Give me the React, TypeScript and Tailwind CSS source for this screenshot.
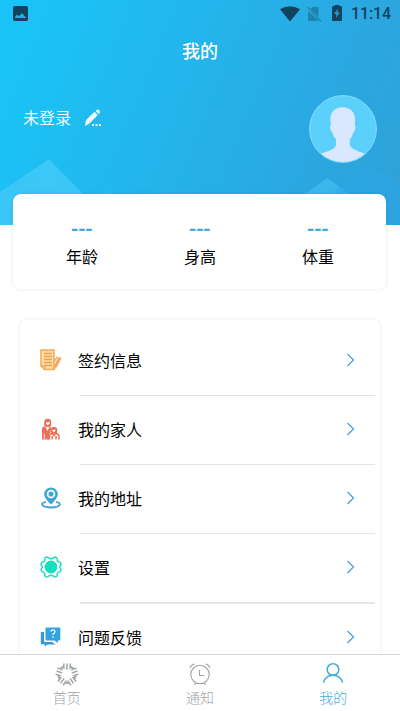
import { ReactNode } from "react";

interface MenuItem {
  label: string;
  icon: ReactNode;
  rowClass: string;
}

function StatusBar() {
  return (
    <div className="flex h-[27px] items-center justify-between pl-[13px] pr-[9px] text-[#10435c]">
      <svg width="15" height="15" viewBox="0 0 15 15">
        <rect width="15" height="15" rx="1.8" fill="currentColor" />
        <path d="M2 12V11L4.2 8.6 5.8 10.2 9 7l4 4.4v.6z" fill="#24acdb" />
      </svg>
      <div className="flex items-center">
        <svg width="20" height="16" viewBox="0 0 20 16">
          <path d="M0 3.3Q10-3 20 3.3L10 15.5z" fill="currentColor" />
        </svg>
        <svg className="ml-[6px]" width="16" height="16" viewBox="0 0 16 16">
          <path d="M6.500 1h6v14H2V6z" fill="#1f83ae" />
          <path d="M1 1.500l14 14" stroke="#2aaee3" strokeWidth="2.500" />
          <path d="M1.500 1l13.500 14.500" stroke="#2284b0" strokeWidth="1.200" />
        </svg>
        <svg className="mb-[2px] ml-[10px]" width="10" height="16" viewBox="0 0 10 16">
          <path d="M2.500 0h5v1.200H10V16H0V1.200h2.500z" fill="currentColor" />
          <path d="M6 3.500L2 9h2.500L4 13l4-5.500H5.500z" fill="#2a9bd0" />
        </svg>
        <span className="ml-[9px] font-[Roboto] text-[16px] font-medium leading-[26px] tracking-[-0.1px]">
          11:14
        </span>
      </div>
    </div>
  );
}

function Avatar() {
  return (
    <svg className="mt-[1px]" width="68" height="68" viewBox="0 0 68 68">
      <clipPath id="avatar">
        <circle cx="34" cy="34" r="33.200" />
      </clipPath>
      <circle cx="34" cy="34" r="33.400" fill="#5ad0fa" />
      <path
        clipPath="url(#avatar)"
        d="M33.500 12.300c8 0 12.600 5 12.600 12.500l-.3 5c1.200.5.8 6.500-1.300 7.200-.8 3.300-2 5.600-3.700 7.300v5.500c1 4.600 8 6.100 14.700 8.700L58 68H10l2.500-9.500c6.500-2.600 13.500-3.500 14.500-8.700v-5.500c-1.800-1.700-3-4-3.700-7.300-2.300-.7-2.800-6.600-1.500-7.200l-.5-5c0-7.500 4.200-12.500 12.200-12.500z"
        fill="#d9e7ff"
      />
      <circle cx="34" cy="34" r="33.400" fill="none" stroke="#87ddfb" />
    </svg>
  );
}

function ContractIcon() {
  return (
    <svg width="22" height="22" viewBox="0 0 22 22" fill="none">
      <path d="M1 1h13v19.500H4.500L1 17z" fill="#fbdcae" stroke="#f2aa52" strokeWidth="1.500" />
      <path d="M4 4.500h8M4 7.500h8M4 10.500h8M4 13.500h8M4 16.500h8" stroke="#f2a04a" strokeWidth="1.500" />
      <path d="M1 17h4v3.500" stroke="#f0a84f" />
      <path d="M21 9l-4.400 8.800-2.500 2.700.5-3.700 4-8.300z" fill="#f7a860" stroke="#f2a050" strokeWidth=".8" />
      <path d="M14 13l3.500-5.500" stroke="#f2a050" strokeWidth="1.200" />
    </svg>
  );
}

function FamilyIcon() {
  return (
    <svg width="22" height="22" viewBox="0 0 22 22" fill="none" stroke="#ec6f59">
      <path d="M4.200 7.500V4Q4.500.8 7.700.8T11.200 4v3.500L9.500 9H6z" fill="#ec6f59" stroke="none" />
      <path d="M6 4.500q2 .3 3.500-1V6L7.700 7.300 6 6z" fill="#fff" stroke="none" />
      <path d="M2 21.500V11q0-2.500 2.500-2.500h1l2 4.500 2-4.500 1.500 1-.5 4.500-1 2v5.500z" fill="#ec6f59" stroke="none" />
      <path d="M4.300 15.500v6" stroke="#fff" strokeWidth=".8" />
      <path d="M11 14.300c-1-4.500.8-5.300 3-5.300s4 .8 3 5.300l-1.500 1.500h-3z" fill="#ec6f59" stroke="none" />
      <path d="M12.300 12q2 0 3-.8v1.800l-1.300 1.200-1.500-1.200z" fill="#fff" stroke="none" />
      <path d="M9.500 21.500V17.500q.5-2 3-2l1.500 2 1.500-2q3 0 3.500 2.500v3.500M12.200 18v3.500M16 18v3.500" strokeWidth="1.500" />
    </svg>
  );
}

function AddressIcon() {
  return (
    <svg width="22" height="22" viewBox="0 0 22 22" fill="none" stroke="#3ca5d5">
      <path d="M6 14.800c-6.500 1.200-5 5.700 5 5.700s11.500-4.500 5-5.700" strokeWidth="1.800" />
      <path d="M11 17.500C6.500 13 4.200 10 4.200 7.200a6.800 6.800 0 0113.600 0c0 2.800-2.300 5.800-6.800 10.300z" fill="#3ca5d5" stroke="none" />
      <circle cx="11" cy="7" r="3.400" fill="#3ca5d5" stroke="#fff" strokeWidth="1.700" />
    </svg>
  );
}

function SettingsIcon() {
  return (
    <svg width="22" height="22" viewBox="0 0 22 22">
      <path
        d="M5.500 1.500Q8 .5 9 2.300q2 1 4 0Q14 .5 16.500 1.500q1.200 1 .7 2.800.8 1.700 3 2.200 1.500 2-.2 3.500-.5 1 0 2 1.700 1.500.2 3.500-2.200.5-3 2.200.5 1.800-.7 2.800-2.500 1-3.500-.8-2-1-4 0-1 1.800-3.500.8-1.200-1-.7-2.800-.8-1.700-3-2.200-1.500-2 .2-3.500.5-1 0-2Q.3 8.500 1.800 6.500q2.200-.5 3-2.200-.5-1.800.7-2.800z"
        fill="none"
        stroke="#2edcc0"
        strokeWidth="1.600"
        strokeLinejoin="round"
      />
      <circle cx="11" cy="11" r="6.400" fill="#16dfc0" />
    </svg>
  );
}

function FeedbackIcon() {
  return (
    <svg width="22" height="22" viewBox="0 0 22 22">
      <path d="M1.500 6H4v8.500q0 1.500 1.500 1.500H12l3.500 2.500H7.500L5 20.500l-.5-2.300h-3Q.8 18 .8 17V7q0-1 .7-1z" fill="#3699d2" />
      <path d="M6.500 1.500h12.800q1 0 1 1v11q0 1-1 1h-1.500v2.700L14.500 14.500h-8q-1 0-1-1v-11q0-1 1-1z" fill="#31a3e0" />
      <path d="M10.800 5.500Q11.200 3.800 13 3.800t2 1.800c0 1.600-2 1.500-2 3.300M13 10.300v1.500" fill="none" stroke="#fff" strokeWidth="1.300" />
    </svg>
  );
}

const petalAngles = [0, 72, 144, 216, 288];

function HomeIcon() {
  return (
    <svg width="24" height="24" viewBox="0 0 24 24" fill="none" stroke="#a3a8a8" strokeWidth="1.600">
      {petalAngles.map((angle) => (
        <path
          key={angle}
          d="M12 1.500v6M8.800 1.500v4.500l-2-1.500M15.200 1.500v4.500l2-1.500"
          transform={`rotate(${angle} 12 12.5)`}
        />
      ))}
    </svg>
  );
}

function NoticeIcon() {
  return (
    <svg width="24" height="24" viewBox="0 0 24 24" fill="none" stroke="#a3a8a8" strokeWidth="1.100">
      <circle cx="12" cy="12.500" r="9.200" />
      <path d="M11.500 8v5.500h4.800M7.500 20.800l-1 2.200M16.500 20.800l1 2.200M1.800 6Q3 2.700 6.300 2M22.200 6Q21 2.700 17.700 2" />
    </svg>
  );
}

function MineIcon() {
  return (
    <svg width="24" height="24" viewBox="0 0 24 24" fill="none" stroke="#3fadd9" strokeWidth="1.500">
      <circle cx="12" cy="7.500" r="5.800" />
      <path d="M2.500 20.500q2.200-7.200 9.500-7.200t9.500 7.200" />
    </svg>
  );
}

const stats = [
  { label: "年龄", value: "---" },
  { label: "身高", value: "---" },
  { label: "体重", value: "---" },
];

const menu: MenuItem[] = [
  { label: "签约信息", icon: <ContractIcon />, rowClass: "h-[69px] border-b" },
  { label: "我的家人", icon: <FamilyIcon />, rowClass: "h-[69px] border-b" },
  { label: "我的地址", icon: <AddressIcon />, rowClass: "h-[69px] border-b" },
  { label: "设置", icon: <SettingsIcon />, rowClass: "h-[70px] border-b-2" },
  { label: "问题反馈", icon: <FeedbackIcon />, rowClass: "h-[68px]" },
];

const tabs = [
  { label: "首页", icon: <HomeIcon />, color: "text-[#a0a5a5]" },
  { label: "通知", icon: <NoticeIcon />, color: "text-[#a0a5a5]" },
  { label: "我的", icon: <MineIcon />, color: "text-[#3fadd9]" },
];

function Header() {
  return (
    <header className="relative h-[225px] shrink-0 bg-[linear-gradient(112deg,#1ac4f8_5%,#23b5eb_44%,#2aa9e2_72%,#2fa0d8_100%)]">
      <svg className="absolute bottom-0 left-0" width="400" height="70" viewBox="0 0 400 70">
        <path d="M0 37L49 4l38 39v27H0z" fill="#3ec8f8" opacity=".9" />
        <path d="M92 45l15-11 15 11z" fill="#3ec0f0" opacity=".35" />
        <path d="M304 40l23-17 24 17z" fill="#3bb7ec" />
        <path d="M335 35l34-25 31 20v40H335z" fill="#2ba8e8" opacity=".5" />
      </svg>
      <div className="relative">
        <StatusBar />
        <h1 className="mt-[10px] text-center text-[18px] font-medium leading-[26px] text-white">
          我的
        </h1>
        <div className="mt-[31px] flex items-start justify-between px-[23px]">
          <div className="flex items-center pt-[11px]">
            <span className="text-[16px] leading-6 text-[#f0faff]">未登录</span>
            <svg className="ml-[13px] mt-[1px]" width="18" height="18" viewBox="0 0 18 18" fill="#ecf9fe">
              <path d="M2 11L10.500 2.800l3.300 3.200L5.500 14.500 1 17zM11.500 2L13 .7q1-.6 2 .2l.9 1.300q.7 1 0 1.800L14.600 5z" />
              <path d="M8 15h2v2H8zM11.500 15h2v2h-2zM15 15h2v2h-2z" />
            </svg>
          </div>
          <Avatar />
        </div>
      </div>
    </header>
  );
}

function App() {
  return (
    <div className="flex h-[711px] w-[400px] flex-col overflow-hidden bg-white font-['Noto_Sans_CJK_SC',sans-serif] text-black">
      <main className="flex min-h-0 flex-1 flex-col overflow-hidden">
        <Header />

        <section className="relative ml-[13px] mr-[14px] -mt-[31px] flex h-[95px] shrink-0 justify-center rounded-[8px] bg-white pl-px shadow-[0_0_4px_rgba(0,0,0,0.1)]">
          {stats.map((stat) => (
            <div key={stat.label} className="flex w-[118px] flex-col items-center pt-[23px]">
              <span className="-ml-px font-[Roboto] text-[20px] font-bold leading-6 tracking-[-0.7px] text-[#45a9dc]">
                {stat.value}
              </span>
              <span className="mt-[3px] text-[16px] leading-6">{stat.label}</span>
            </div>
          ))}
        </section>

        <section className="mx-[20px] mt-[31px] shrink-0 rounded-[6px] bg-white pt-[7px] shadow-[0_0_4px_rgba(0,0,0,0.1)]">
          {menu.map((item) => (
            <div key={item.label} className="flex pl-[20px] pr-[5px]">
              <div className="flex h-[66px] w-[40px] items-center">{item.icon}</div>
              <div className={`flex flex-1 items-center justify-between border-[#e5e5e5] pr-[20px] ${item.rowClass}`}>
                <span className="-ml-[2px] mb-[2px] text-[16px] leading-6">{item.label}</span>
                <svg className="mb-[3px]" width="9" height="14" viewBox="0 0 9 14" fill="none">
                  <path d="M1.500 1l6 6-6 6" stroke="#4ca0de" strokeWidth="1.300" />
                </svg>
              </div>
            </div>
          ))}
        </section>
      </main>

      <nav className="flex h-[57px] shrink-0 border-t border-[#d4d4d4] bg-white">
        {tabs.map((tab) => (
          <div key={tab.label} className={`flex flex-1 flex-col items-center pt-[7px] ${tab.color}`}>
            {tab.icon}
            <span className="mt-[1px] text-[14px] font-light leading-[20px]">{tab.label}</span>
          </div>
        ))}
      </nav>
    </div>
  );
}

export default App;
